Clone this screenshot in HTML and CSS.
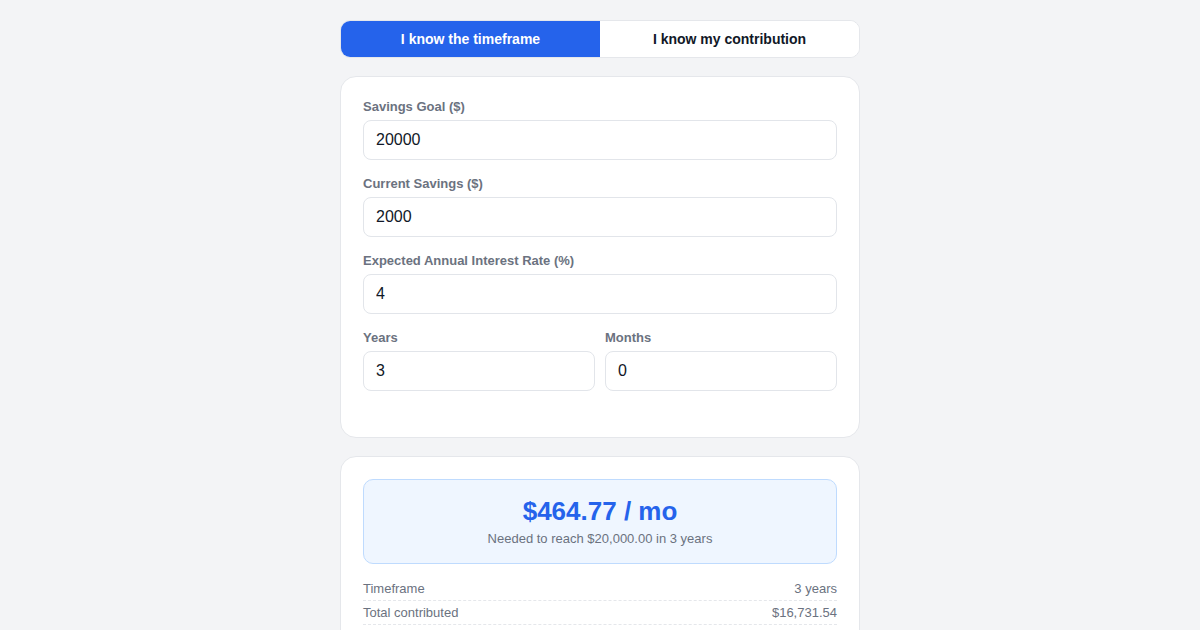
FILE: index.html
```html
<!DOCTYPE html>
<html lang="en">
<head>
<meta charset="utf-8">
<title>Savings Goal Calculator</title>
<link rel="stylesheet" href="styles.css">
</head>
<body>
<main class="wrap">
  <div class="toggle">
    <button class="tab active" type="button">I know the timeframe</button>
    <button class="tab" type="button">I know my contribution</button>
  </div>

  <section class="card form-card">
    <div class="field">
      <label class="label">Savings Goal ($)</label>
      <input class="input" type="text" value="20000">
    </div>
    <div class="field">
      <label class="label">Current Savings ($)</label>
      <input class="input" type="text" value="2000">
    </div>
    <div class="field">
      <label class="label">Expected Annual Interest Rate (%)</label>
      <input class="input" type="text" value="4">
    </div>
    <div class="row">
      <div class="field last">
        <label class="label">Years</label>
        <input class="input" type="text" value="3">
      </div>
      <div class="field last">
        <label class="label">Months</label>
        <input class="input" type="text" value="0">
      </div>
    </div>
  </section>

  <section class="card result-card">
    <div class="result">
      <div class="result-amount">$464.77 / mo</div>
      <div class="result-sub">Needed to reach $20,000.00 in 3 years</div>
    </div>
    <div class="stat">
      <span class="stat-label">Timeframe</span>
      <span class="stat-value">3 years</span>
    </div>
    <div class="stat">
      <span class="stat-label">Total contributed</span>
      <span class="stat-value">$16,731.54</span>
    </div>
  </section>
</main>
</body>
</html>
```

FILE: styles.css
```css
* {
  box-sizing: border-box;
}

html, body {
  margin: 0;
  padding: 0;
}

body {
  background: #f3f4f6;
  font-family: "Liberation Sans", Arial, sans-serif;
  color: #111827;
}

.wrap {
  width: 520px;
  margin: 0 auto;
  padding-top: 20px;
  padding-bottom: 20px;
}

.toggle {
  display: grid;
  grid-template-columns: 1fr 1fr;
  border: 1px solid #e5e7eb;
  border-radius: 10px;
  overflow: hidden;
  background: #ffffff;
}

.tab {
  font-family: "Liberation Sans", Arial, sans-serif;
  font-size: 14px;
  font-weight: 700;
  line-height: 16px;
  padding: 10px 0 10px;
  border: 0;
  background: #ffffff;
  color: #111827;
  cursor: pointer;
}

.tab.active {
  background: #2563eb;
  color: #ffffff;
}

.card {
  background: #ffffff;
  border: 1px solid #e5e7eb;
  border-radius: 16px;
  padding: 22px;
  margin-top: 18px;
}

.form-card {
  padding-bottom: 46px;
}

.field {
  display: flex;
  flex-direction: column;
  gap: 6px;
  margin-bottom: 16px;
}

.field.last {
  margin-bottom: 0;
}

.label {
  font-size: 13px;
  font-weight: 700;
  line-height: 15px;
  color: #6b7280;
}

.input {
  height: 40px;
  width: 100%;
  border: 1px solid #e2e5ea;
  border-radius: 8px;
  padding: 0 12px;
  font-family: "Liberation Sans", Arial, sans-serif;
  font-size: 16px;
  color: #111827;
  background: #ffffff;
  outline: none;
}

.row {
  display: grid;
  grid-template-columns: 1fr 1fr;
  gap: 10px;
}

.result {
  background: #eff6ff;
  border: 1px solid #bfdbfe;
  border-radius: 10px;
  padding: 15px 16px 16px;
  text-align: center;
  margin-bottom: 13px;
}

.result-amount {
  font-size: 26px;
  font-weight: 700;
  line-height: 32px;
  color: #2563eb;
}

.result-sub {
  margin-top: 4px;
  font-size: 13px;
  line-height: 16px;
  color: #6b7280;
}

.stat {
  display: flex;
  justify-content: space-between;
  font-size: 13px;
  line-height: 16px;
  padding: 4px 0 3px;
  border-bottom: 1px dashed #e5e7eb;
  color: #6b7280;
}
```
